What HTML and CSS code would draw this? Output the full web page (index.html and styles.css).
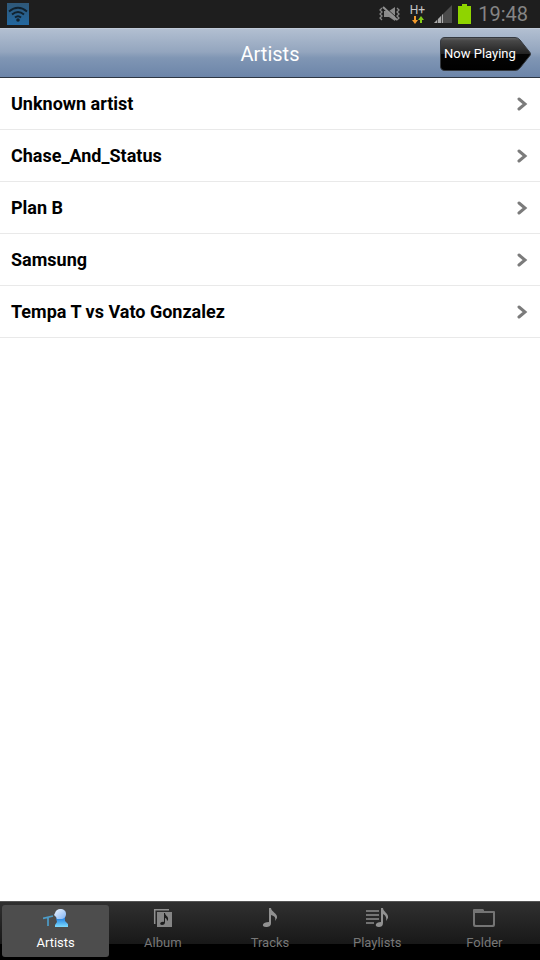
FILE: index.html
```html
<!DOCTYPE html>
<html lang="en">
<head>
<meta charset="utf-8">
<meta name="viewport" content="width=device-width, initial-scale=1">
<title>Artists</title>
<link rel="stylesheet" href="styles.css">
</head>
<body>
<div class="status">
  <svg class="wifi" width="22" height="22" viewBox="0 0 22 22" aria-hidden="true">
    <defs><linearGradient id="wf" x1="0" y1="0" x2="0" y2="1"><stop offset="0" stop-color="#2f5878"/><stop offset="1" stop-color="#22679f"/></linearGradient></defs>
    <rect width="22" height="22" fill="url(#wf)"/>
    <g fill="none" stroke="#10222f" stroke-width="2"><path d="M2 8.500Q11 1 20 8.500M5 11.500Q11 6.500 17 11.500M8 14.500Q11 12 14 14.500"/></g>
    <circle cx="11" cy="17" r="1.800" fill="#10222f"/>
  </svg>
  <svg class="mute" width="22" height="16" viewBox="0 0 22 16" aria-hidden="true">
    <path fill="#8a8a8a" d="M5 5h5l6-4v14l-6-4H5z"/>
    <path fill="none" stroke="#1e1e1e" stroke-width="1" d="M6 1l13 12"/>
    <path fill="none" stroke="#929292" stroke-width="2" d="M4 1l14 13"/>
    <path fill="none" stroke="#858585" stroke-width="1.300" d="M3 2L1 4l2 2-2 2 2 2-2 2 2 2M18 2l2 2-2 2 2 2-2 2 2 2-2 2"/>
  </svg>
  <div class="net">
    <span>H+</span>
    <svg width="12" height="8" viewBox="0 0 12 8" aria-hidden="true"><path fill="#f39a2c" d="M2 0h2v4h2L3 8 0 4h2z"/><path fill="#86cc18" d="M8 7h2V4h2L9 0 6 4h2z"/></svg>
  </div>
  <svg class="signal" width="18" height="18" viewBox="0 0 18 18" aria-hidden="true">
    <path fill="#4b4b4b" d="M18 0v18H0z"/>
    <path fill="#aaa" d="M0 18l3-3v3zM4 14l3-3v7H4zM8 18v-8l1-1v9z"/>
  </svg>
  <svg class="battery" width="13" height="20" viewBox="0 0 13 20" aria-hidden="true"><path fill="#8fd400" d="M4 0h5v2h4v18H0V2h4z"/></svg>
  <time class="clock">19:48</time>
</div>
<header class="bar">
  <h1>Artists</h1>
  <button class="now" type="button">
    <svg width="91" height="34" viewBox="0 0 91 34" aria-hidden="true">
      <defs><linearGradient id="nb" x1="0" y1="0" x2="0" y2="1"><stop offset="0" stop-color="#666"/><stop offset=".1" stop-color="#474747"/><stop offset=".5" stop-color="#222"/><stop offset=".5" stop-color="#040404"/><stop offset="1" stop-color="#000"/></linearGradient></defs>
      <path fill="url(#nb)" stroke="#35393f" d="M5 .5H75Q78 .5 80 3L90 15.500Q91 17 90 18.500L80 31Q78 33.500 75 33.500H5Q.5 33.500 .5 29V5Q.5 .5 5 .5z"/>
    </svg>
    <span>Now Playing</span>
  </button>
</header>
<main class="list">
  <a href="#unknown">Unknown artist<svg width="12" height="14" viewBox="0 0 12 14" aria-hidden="true"><path d="M3 2l6 5-6 5"/></svg></a>
  <a href="#chase">Chase_And_Status<svg width="12" height="14" viewBox="0 0 12 14" aria-hidden="true"><path d="M3 2l6 5-6 5"/></svg></a>
  <a href="#planb">Plan B<svg width="12" height="14" viewBox="0 0 12 14" aria-hidden="true"><path d="M3 2l6 5-6 5"/></svg></a>
  <a href="#samsung">Samsung<svg width="12" height="14" viewBox="0 0 12 14" aria-hidden="true"><path d="M3 2l6 5-6 5"/></svg></a>
  <a href="#tempa">Tempa T vs Vato Gonzalez<svg width="12" height="14" viewBox="0 0 12 14" aria-hidden="true"><path d="M3 2l6 5-6 5"/></svg></a>
</main>
<nav class="tabs">
  <a class="on" href="#artists">
    <svg width="26" height="20" viewBox="0 0 26 20" aria-hidden="true">
      <defs><linearGradient id="hd" x1="0" y1="0" x2="1" y2="1"><stop offset="0" stop-color="#f0f6ff"/><stop offset="1" stop-color="#7eb2f4"/></linearGradient><linearGradient id="bd" x1="0" y1="0" x2="0" y2="1"><stop offset="0" stop-color="#1674dc"/><stop offset="1" stop-color="#7edcff"/></linearGradient></defs>
      <path fill="url(#bd)" d="M13 10l9-1v4l3 3v3H12v-2l2-3z"/>
      <path fill="url(#hd)" d="M17 1c4 0 6 2 6 5s-2 5-5 5h-4l-1-2-2-2 1-2c1-3 3-4 5-4z"/>
      <path fill="none" stroke="#4d9dc9" stroke-width="1.700" d="M0 10.500L10 8M5 10v8"/>
    </svg>
    <span>Artists</span>
  </a>
  <a href="#album">
    <svg width="20" height="20" viewBox="0 0 20 20" aria-hidden="true">
      <path fill="none" stroke="#909090" stroke-width="1.500" d="M1.700 16V1.700H16"/>
      <path fill="#858585" d="M4 4h15v15H4z"/>
      <path fill="#1c1c1c" d="M11 5h1c0 3 4 3 3 7l-1 1c0-2-1-3-2-3v4c0 2-1 3-3 3-3 0-2-4 2-3z"/>
    </svg>
    <span>Album</span>
  </a>
  <a href="#tracks">
    <svg width="20" height="20" viewBox="0 0 20 20" aria-hidden="true">
      <path fill="#919191" d="M9 0h2c0 4 7 5 6 10l-2 3c1-3 0-5-4-6v8c0 3-2 4-5 4-5 0-4-5 3-5z"/>
    </svg>
    <span>Tracks</span>
  </a>
  <a href="#playlists">
    <svg width="24" height="20" viewBox="0 0 24 20" aria-hidden="true">
      <path fill="none" stroke="#8c8c8c" stroke-width="1.700" d="M1 3h13M1 7h13M1 11h13M1 15h8"/>
      <path fill="#919191" d="M16 0h2c0 4 6 5 5 10l-2 3c1-4-1-6-3-7v9c0 3-2 4-4 4-5 0-4-5 2-5z"/>
    </svg>
    <span>Playlists</span>
  </a>
  <a href="#folder">
    <svg width="22" height="20" viewBox="0 0 22 20" aria-hidden="true">
      <path fill="#747474" fill-rule="evenodd" d="M0 2Q0 1 1 1h9l1 1v1h10q1 0 1 1v13q0 2-2 2H2q-2 0-2-2zM2 5v11q0 1 1 1h16q1 0 1-1V5z"/>
    </svg>
    <span>Folder</span>
  </a>
</nav>
</body>
</html>
```

FILE: styles.css
```css
* { box-sizing: border-box; }
body {
  margin: 0;
  min-height: 100vh;
  display: flex;
  flex-direction: column;
  background: #fff;
  font-family: Roboto, "Liberation Sans", sans-serif;
}
svg { display: block; flex: none; }
a { color: inherit; text-decoration: none; }
.status {
  height: 28px;
  display: flex;
  align-items: center;
  padding: 0 12px 0 7px;
  background: #1e1e1e;
}
.wifi { margin-right: auto; }
.net {
  display: flex;
  flex-direction: column;
  align-items: center;
  margin: 0 9px;
  font-size: 12px;
  line-height: 12px;
  color: #c6c6c6;
}
.signal { margin-right: 6px; }
.clock {
  margin-left: 7px;
  font-size: 20px;
  line-height: 28px;
  color: #858585;
}
.bar {
  height: 50px;
  display: grid;
  grid-template-columns: 1fr auto 1fr;
  align-items: center;
  padding: 2px 9px 0;
  background: linear-gradient(#b2bfd1, #93a5be 48%, #8096b4 60%, #6c85a9);
  border-top: 1px solid #c0cad8;
  border-bottom: 1px solid #2d3642;
}
h1 {
  grid-column: 2;
  margin: 0;
  font-size: 20px;
  line-height: 24px;
  font-weight: 400;
  color: #fff;
}
.now {
  justify-self: end;
  display: grid;
  align-items: center;
  padding: 0;
  border: 0;
  background: none;
  color: #fff;
  font: 13px/18px Roboto, "Liberation Sans", sans-serif;
}
.now svg, .now span { grid-area: 1 / 1; }
.now span { padding-left: 4px; text-align: left; }
.list { flex: 1; }
.list a {
  height: 52px;
  display: flex;
  align-items: center;
  justify-content: space-between;
  padding: 0 12px 0 11px;
  border-bottom: 1px solid #e9e9e9;
  font-size: 18px;
  line-height: 24px;
  font-weight: 700;
  color: #000;
}
.list path { fill: none; stroke: #7b7b7b; stroke-width: 3; stroke-linecap: round; }
.tabs {
  height: 59px;
  display: grid;
  grid-template-columns: repeat(5, 1fr);
  padding: 3px 2px;
  background: linear-gradient(#303030, #181818 72%, #000 73%);
  border-top: 1px solid #555;
}
.tabs a {
  display: flex;
  flex-direction: column;
  align-items: center;
  gap: 7px;
  padding-top: 3px;
  border-radius: 3px;
  font-size: 13px;
  line-height: 16px;
  color: #777;
}
.tabs .on { background: #4d4d4d; color: #fff; }
```
